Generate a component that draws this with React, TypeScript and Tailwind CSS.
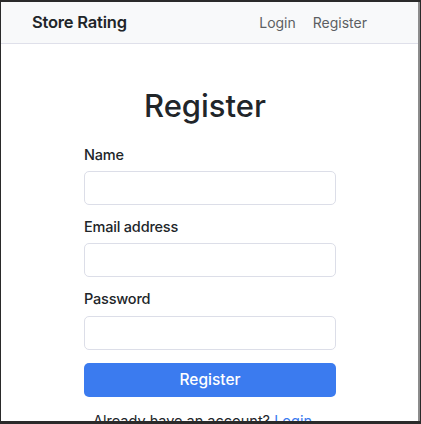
export default function App() {
  return (
    <div
      className="w-[421px] h-[424px] bg-[#2a2a2a] pt-[2px] pl-[1px] pr-px pb-[3px]"
      style={{ fontFamily: 'Inter, "Noto Sans", sans-serif' }}
    >
      <div className="h-full bg-white border-r-2 border-[#8c8c8c] overflow-hidden flex flex-col">
        {/* Navbar */}
        <nav className="h-[42px] shrink-0 bg-[#f8f9fa] border-b border-[#dfe0ea] flex items-center justify-between pl-[31px] pr-[51px]">
          <span className="text-[16.5px] font-semibold text-[#212529] tracking-[-0.2px]">Store Rating</span>
          <div className="flex items-center gap-[17px] text-[14px] text-[#5c5f63]">
            <span>Login</span>
            <span>Register</span>
          </div>
        </nav>

        {/* Form */}
        <div className="flex flex-col pl-[83px] pr-[82px]">
          <h1 className="mt-[42px] text-center text-[31px] font-medium text-[#212529] leading-[40px] pr-[10px]">
            Register
          </h1>

          <div className="mt-[18px] flex flex-col">
            <label className="text-[14.5px] font-medium text-[#212529] leading-[22px] tracking-[-0.2px]">Name</label>
            <input className="mt-[5px] h-[34px] rounded-[5px] border border-[#dcdee8] bg-white" />
          </div>

          <div className="mt-[11px] flex flex-col">
            <label className="text-[14.5px] font-medium text-[#212529] leading-[22px] tracking-[-0.2px]">Email address</label>
            <input className="mt-[5px] h-[34px] rounded-[5px] border border-[#dcdee8] bg-white" />
          </div>

          <div className="mt-[11px] flex flex-col">
            <label className="text-[14.5px] font-medium text-[#212529] leading-[22px] tracking-[-0.2px]">Password</label>
            <input type="password" className="mt-[6px] h-[34px] rounded-[5px] border border-[#dcdee8] bg-white" />
          </div>

          <button className="mt-[13px] h-[34px] rounded-[5px] bg-[#3b7bef] text-white text-[15.5px] font-medium">
            Register
          </button>

          <p className="mt-[13px] pl-[9px] text-[14.5px] text-[#212529] leading-[22px]">
            Already have an account? <span className="text-[#3b7bef]">Login</span>
          </p>
        </div>
      </div>
    </div>
  );
}
